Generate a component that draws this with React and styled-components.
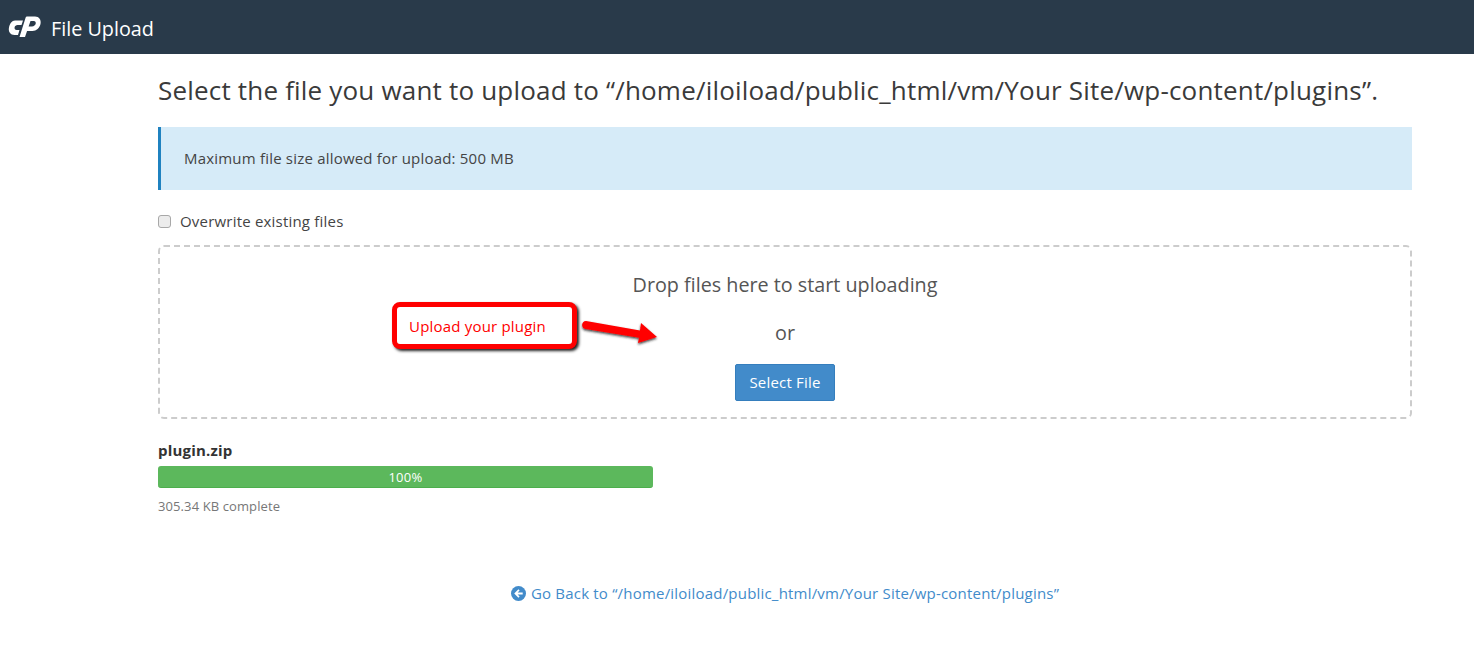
import React from 'react';
import styled, { createGlobalStyle } from 'styled-components';

const Global = createGlobalStyle`
  html, body { margin: 0; padding: 0; background: #fff; }
  body { font-family: "Open Sans", "Liberation Sans", sans-serif; font-size: 15px; letter-spacing: 0.2px; color: #333; }
  * { box-sizing: border-box; }
`;
const Header = styled.header`
  height: 54px; background: #293a4a; display: flex; align-items: center; padding-left: 8px; gap: 9px;
`;
const Title = styled.span`color: #fff; font-size: 19.8px; letter-spacing: 0; line-height: 54px; position: relative; top: 2px;`;
const Main = styled.main`
  margin: 0 62px 0 158px; display: flex; flex-direction: column;
`;
const Heading = styled.h1`
  margin: 20px 0 0; font-size: 26px; letter-spacing: 0.19px; font-weight: 400; line-height: 33px; color: #3a3a3a; white-space: nowrap;
`;
const Alert = styled.div`
  margin-top: 20px; height: 63px; background: #d6ebf8; border-left: 3px solid #1f82c0;
  padding: 0 0 2px 23px; display: flex; align-items: center; color: #444;
`;
const CheckRow = styled.label`
  margin-top: 21px; height: 20px; display: flex; align-items: center; gap: 9px; color: #444;
`;
const Box = styled.span`
  width: 13px; height: 13px; border: 1px solid #a8a8a8; border-radius: 3px; background: #ececec; display: block;
`;
const Drop = styled.div`
  position: relative; margin-top: 14px; height: 174px; border: 2px dashed #ccc; border-radius: 6px;
  display: flex; flex-direction: column; align-items: center; color: #555; padding-top: 23px;
`;
const DropLine = styled.div`font-size: 19.75px; letter-spacing: 0; line-height: 30px; color: #555; margin-bottom: ${p => p.$mb}px;`;
const SelectBtn = styled.button`
  width: 100px; height: 37px; background: #428bca; border: 1px solid #357ebd; border-radius: 2px;
  color: #fff; font: 400 15px "Open Sans", sans-serif; letter-spacing: 0.2px; padding: 0 0 2px;
`;
const Callout = styled.div`
  position: absolute; left: 232px; top: 55px; width: 185px; height: 47px; border: 5px solid #f00; border-radius: 8px;
  background: #fff; color: #f00; font-size: 15px; line-height: 38px; padding-left: 12px;
  box-shadow: 2px 2px 3px #222;
`;
const Arrow = styled.svg`position: absolute; left: 421px; top: 72px;`;
const FileName = styled.div`margin-top: 21px; font-weight: 700; line-height: 20px; color: #333;`;
const Track = styled.div`
  margin-top: 6px; width: 495px; height: 22px; background: #5cb85c; border-radius: 3px; border-bottom: 1px solid #4cae4c;
  color: #fff; font-size: 13px; letter-spacing: 0.3px; line-height: 22px; text-align: center;
`;
const Note = styled.div`margin-top: 9px; font-size: 13px; letter-spacing: 0.1px; line-height: 18px; color: #777;`;
const Back = styled.a`
  margin-top: 68px; align-self: center; display: flex; align-items: center; gap: 5px; color: #428bca; line-height: 20px;
`;

const Logo = () => (
  <svg width="34" height="24" viewBox="0 0 34 24" aria-hidden="true">
    <path fill="#fff" d="M7 5.5H15L13.5 10H9.5C8 10 7 11 6.6 12.2 6.2 13.6 7.2 15 8.6 15H11.5L10 20H6.5C2.5 20 0 16.5 1 12.5 1.8 8.5 4 5.5 7 5.5Z" />
    <path fill="#fff" d="M19 1.5H27C31 1.5 33.5 5 32.5 9 31.5 13 28.5 16 24.5 16H19L20.5 11.5H24C26 11.5 27.3 10 27.7 8.8 28.1 7.3 27.2 6 25.7 6H22.5L17 22H11.5L17.5 3C17.8 2 18.3 1.5 19 1.5Z" />
  </svg>
);
const BackIcon = () => (
  <svg width="15" height="15" viewBox="0 0 15 15" aria-hidden="true">
    <circle cx="7.5" cy="7.5" r="7.5" fill="#428bca" />
    <path fill="#fff" d="M7.4 3.3 3.2 7.5l4.2 4.2 1.2-1.2-2-2h5.1V6.5H6.6l2-2z" />
  </svg>
);

export default function App() {
  return (
    <>
      <Global />
      <Header><Logo /><Title>File Upload</Title></Header>
      <Main>
        <Heading>Select the file you want to upload to “/home/iloiload/public_html/vm/Your Site/wp-content/plugins”.</Heading>
        <Alert>Maximum file size allowed for upload: 500 MB</Alert>
        <CheckRow><Box />Overwrite existing files</CheckRow>
        <Drop>
          <DropLine $mb={18}>Drop files here to start uploading</DropLine>
          <DropLine $mb={16}>or</DropLine>
          <SelectBtn>Select File</SelectBtn>
          <Callout>Upload your plugin</Callout>
          <Arrow width="80" height="30" viewBox="0 0 80 30" aria-hidden="true">
            <defs>
              <filter id="s" x="-20%" y="-30%" width="140%" height="170%">
                <feDropShadow dx="0" dy="1.5" stdDeviation="1" floodColor="#222" floodOpacity=".85" />
              </filter>
            </defs>
            <path filter="url(#s)" fill="#f00" d="M5 2L59 11.5 60 4 76 18 57 24 58 18.7 4.5 10C0 9.5 0 2 5 2Z" />
          </Arrow>
        </Drop>
        <FileName>plugin.zip</FileName>
        <Track>100%</Track>
        <Note>305.34 KB complete</Note>
        <Back><BackIcon />Go Back to “/home/iloiload/public_html/vm/Your Site/wp-content/plugins”</Back>
      </Main>
    </>
  );
}
